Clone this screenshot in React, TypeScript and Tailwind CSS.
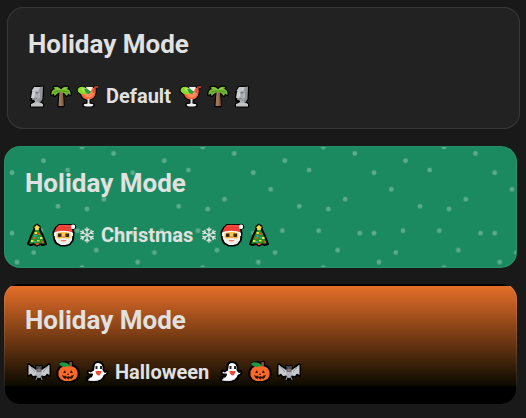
import type { ReactNode } from "react";

const iconSize = "block h-6 w-6 shrink-0 overflow-visible";

function Moai() {
  return (
    <svg viewBox="0 0 18 24" className="block h-6 w-[18px] shrink-0 overflow-visible" aria-hidden="true">
      <path d="M6 3L15 2.500L15 8L14.500 15L12.500 18L15 20V22.500H3V20L6 17.500L3 16L3.500 11L3.500 7.500Z" fill="#a9abb0" stroke="#000" strokeWidth="2.200" strokeLinejoin="round" />
      <path d="M11 3L15 2.500L14.500 15L12.500 18L9 17L11 10Z" fill="#939499" />
      <path d="M6 3H12L11 6.500L5 8L3.500 7Z" fill="#c6c7ca" />
      <path d="M4 8L7.500 7.500L7 12L5.500 14L3 14Z" fill="#cfd0d3" />
      <path d="M7.500 8H11L10 9.500H7.500Z" fill="#77787e" />
      <path d="M4 15.500L9 14.500" stroke="#75767c" strokeWidth="1" />
      <path d="M10 10L12 7V14L9.500 15Z" fill="#b3b4b9" />
      <path d="M3 20L7 18.500H12L15 20V22.500H3Z" fill="#c4c4c7" />
    </svg>
  );
}

function Palm() {
  const fronds =
    "M12 6C10.500 2.500 7 2 4.500 3.500L6 5C3.500 5.500 2 8 2.500 11L5 9.500L5.500 12L9 9L12 8L15 9L18 12L19 9.500L21.500 11C22 8 20.500 5.500 18 5L19.500 3.500C17 2 13.500 2.500 12 6Z";
  return (
    <svg viewBox="0 0 24 24" className={iconSize} aria-hidden="true">
      <path d="M10.500 8H14L14.500 22H9.500Z" fill="#a77b5b" stroke="#000" strokeWidth="2.400" strokeLinejoin="round" />
      <path d={fronds} stroke="#000" strokeWidth="2.400" strokeLinejoin="round" />
      <path d="M10.500 8H14L14.500 22H9.500Z" fill="#a47758" />
      <path d="M12.500 9H14L14.500 22H12.500Z" fill="#8a6047" />
      <path d={fronds} fill="#75b92f" />
      <path d="M5 8L12 6.500L19 8" fill="none" stroke="#4d9627" strokeWidth="1.200" />
      <path d="M7 4L12 6L17 4" fill="none" stroke="#98d347" />
    </svg>
  );
}

function Cocktail() {
  const bowl = "M4.500 4H19.500C20 8 19.500 11 18 13C16.500 15 14.500 15.500 12.500 15.500C10 15.500 8 15 6.500 13C5 11 4.300 8 4.500 4Z";
  return (
    <svg viewBox="0 0 24 24" className={iconSize} aria-hidden="true">
      <path d="M12.500 14V20M8.500 21H16.500" stroke="#000" strokeWidth="4.500" strokeLinecap="round" />
      <path d={bowl} stroke="#000" strokeWidth="2.200" strokeLinejoin="round" />
      <path d="M1.500 6C2 3 5 2 8 3L13 8L10 10C5 11 2 9 1.500 6Z" stroke="#000" strokeWidth="1.800" />
      <path d="M17 8L19 3H22" fill="none" stroke="#000" strokeWidth="3" />
      <path d={bowl} fill="#f06b3b" />
      <path d="M8 9L18 7.500C18 11 16 13.500 12.500 13.500C10 13.500 8 12 8 9Z" fill="#ff8a5c" />
      <path d="M10 3H17L15 7H12Z" fill="#f5eee9" />
      <path d="M1.500 6C2 3 5 2 8 3L13 8L10 10C5 11 2 9 1.500 6Z" fill="#8fd92d" />
      <path d="M5 5L9 3.500L13 8L10 9Z" fill="#b9ea63" />
      <path d="M8 5L11 4.500L15 8L13 10L10 9Z" fill="#249f43" />
      <path d="M17 9L19 3H22" fill="none" stroke="#dc4935" strokeWidth="1.300" />
      <path d="M12.500 15V20" stroke="#dce0e6" strokeWidth="2" />
      <ellipse cx="12.500" cy="21" rx="4.800" ry="1.500" fill="#f0f2f5" />
    </svg>
  );
}

function Tree() {
  return (
    <svg viewBox="0 0 24 24" className={iconSize} aria-hidden="true">
      <path d="M12 1.500L14.500 3.500L15 7L18 13L21 21L18 22L15 21L12 22.500L9 21L6 22L3 21L6 13L9 7L9.500 3.500Z" fill="#168820" stroke="#000" strokeWidth="2" strokeLinejoin="round" />
      <path d="M12 5L16.500 13L19 20L15 20.500L12 21.500L8 20L5 20.500L8 13Z" fill="#279422" />
      <path d="M12 1.500L13.200 3.200L15 4L13.800 5.500V7H10.200V5.500L9 4L10.800 3.200Z" fill="#ffe03a" />
      <path d="M9.500 9H12V11H9.500ZM15 14H17.500V16H15ZM6 17H8.500V19H6ZM12 17H14.500V18.500H12Z" fill="#f5dc34" />
      <path d="M13 10H15V12H13ZM8 14H10.500V16H8ZM11 20H13.500V22H11ZM17 18H19V20H17Z" fill="#ee4b31" />
      <path d="M9 12H11.500V13.500H9ZM12.500 14H14.500V15.500H12.500ZM9 18H11V19.500H9Z" fill="#20a5dc" />
    </svg>
  );
}

function Santa() {
  return (
    <svg viewBox="0 0 24 24" className={iconSize} aria-hidden="true">
      <path d="M1.500 9L4 4.500L7 2H20C23 1 24.500 4 22 5.500L20.500 6L21.500 10L21 17L18 21L14 22.500H9L4 20L2 16Z" fill="#f2f0ed" stroke="#000" strokeWidth="2" strokeLinejoin="round" />
      <path d="M2.500 9L4.500 4.500L7.500 2H19L20.500 9Z" fill="#ef4035" />
      <path d="M6 3.500C9 2 13 2 17 3" fill="none" stroke="#ff5548" />
      <path d="M2 10C5 7 17 7 21 10V13H2Z" fill="#f9f7f5" />
      <path d="M4.500 10.500C8 8.500 15 8.500 18.500 10.500V17H4.500Z" fill="#ffc34b" />
      <circle cx="21" cy="3.700" r="2.200" fill="#fff" />
      <path d="M6 10.500H9.500V14H6ZM13.500 10.500H17V14H13.500Z" fill="#332a20" />
      <path d="M3 14L7 16L11.500 14.500L16 16L20 14V17L17 21L13 22H9L5 19.500Z" fill="#f3f1ef" />
      <path d="M10 13H13V15H10Z" fill="#f09a4c" />
      <path d="M8.500 17H14.500C13.500 19 9.500 19 8.500 17Z" fill="#ef8061" />
    </svg>
  );
}

function Snowflake() {
  return (
    <svg viewBox="0 0 16 16" className="block h-4 w-4 shrink-0 overflow-visible" fill="none" stroke="#e1e1e1" strokeWidth="1.300" aria-hidden="true">
      {[0, 60, 120, 180, 240, 300].map((angle) => (
        <path key={angle} transform={`rotate(${angle} 8 8)`} d="M8 8V0.300M5.700 1.700L8 4L10.300 1.700" />
      ))}
    </svg>
  );
}

function Bat() {
  const outline =
    "M2 4L9 9L9.500 5.500L11 6.500H13L14.500 5.500L15 9L22 4L23 5V16L20 14.500L18 17L15.500 16.500L14 20L12 19L10 20L8.500 16.500L6 17L4 14.500L1 16V5Z";
  return (
    <svg viewBox="0 0 24 24" className={iconSize} aria-hidden="true">
      <path d={outline} fill="#8d9196" stroke="#000" strokeWidth="2" strokeLinejoin="round" />
      <path d="M1.500 5L9 10L10 15L6 16L4 13.500L1.500 15ZM22.500 5L15 10L14 15L18 16L20 13.500L22.500 15Z" fill="#c8cace" />
      <path d="M9.500 5.500L11 6.500H13L14.500 5.500V10L13.500 12H10.500L9.500 10Z" fill="#686c71" />
      <path d="M10 8H11.500M12.500 8H14" stroke="#17181a" />
      <path d="M11 10H13" stroke="#e07a69" />
      <path d="M9.500 12H14.500L14 16L12 18L10 16Z" fill="#b0b3b7" />
      <path d="M2 5L8 12M22 5L16 12M10 17L9 20M14 17L15 20" fill="none" stroke="#8e949b" />
    </svg>
  );
}

function Pumpkin() {
  return (
    <svg viewBox="0 0 24 24" className={iconSize} aria-hidden="true">
      <path d="M4 3L10 2L13 4L13.500 2H16V5L20 7L22.500 11V16L20 20L15 22H8L4 20L1.500 16V11L4 7L6 6Z" fill="#fb6a2a" stroke="#000" strokeWidth="2" strokeLinejoin="round" />
      <path d="M3 3.500C6 1 12 2 14 6L8 7L5 6Z" fill="#21973d" />
      <path d="M13.500 2H16V6.500H13Z" fill="#874a49" />
      <path d="M7 13L9 10L10 13ZM14 13L15 10L17 13ZM12 13L13 15H11Z" fill="#321708" />
      <path d="M6 15L8.500 16L9.500 15.500L11 17L12.500 16L14 17L15.500 15.500L18 15L16.500 18L15 19L14 18L12.500 19.500L10.500 18L9 19L7 17.500Z" fill="#2e170a" />
    </svg>
  );
}

function Ghost() {
  const body =
    "M8.500 7C8.500 3.500 10.500 2 13 2C17 2 19 4.500 18.500 10L20 12L21.500 11C23.500 12 22.500 15 19.500 15.500C19 19 15 22 9 22C6 22 3 21 1.500 20L3.500 18.500L1.500 17.500L6 16.500L7 14.500H4.500C2 14 2 11 4 10.500L5.500 11.500L8 10Z";
  return (
    <svg viewBox="0 0 24 24" className={iconSize} aria-hidden="true">
      <path d={body} fill="#fff" stroke="#000" strokeWidth="2" strokeLinejoin="round" />
      <path d="M10.500 6H12.500V9H10.500ZM15 6H17V9H15Z" fill="#29252c" />
      <path d="M10.500 11H16.500C16 14 14.500 16 13 15.500C11.500 15 10.500 13 10.500 11Z" fill="#f04b36" />
      <path d="M3 20C7 21 12 21 16 18.500" fill="none" stroke="#dcd9e3" />
    </svg>
  );
}

const flakes = [
  [77, 0], [108.5, 6.5], [38.5, 13.7], [62.7, 23], [7, 25.7], [24.3, 42.3],
  [98.8, 52.3], [53, 59.3], [82, 62], [36, 83.7], [72.3, 83.7], [7, 86.2],
  [113.5, 86.2], [91.3, 103.2], [28.7, 105.5], [12, 115.2], [77, 120.67],
];

function Snow() {
  return (
    <svg className="pointer-events-none absolute inset-0 h-full w-full" aria-hidden="true">
      <defs>
        <pattern id="snow" width="120.670" height="120.670" patternUnits="userSpaceOnUse">
          {flakes.map(([x, y]) => (
            <circle key={`${x}-${y}`} cx={x} cy={y} r="2.400" fill="#fff" fillOpacity="0.28" />
          ))}
        </pattern>
      </defs>
      <rect width="100%" height="100%" fill="url(#snow)" />
    </svg>
  );
}

type CardProps = {
  className: string;
  gap: string;
  before: ReactNode;
  label: string;
  after: ReactNode;
  backdrop?: ReactNode;
};

function Card({ className, gap, before, label, after, backdrop }: CardProps) {
  return (
    <section className={`relative overflow-hidden rounded-2xl border px-5 pt-5 pb-4 ${className}`}>
      {backdrop}
      <div className="relative">
        <h2 className="text-[26px] leading-8 font-bold">Holiday Mode</h2>
        <p className="mt-5 flex h-8 items-center text-xl leading-8 font-bold">
          <span className={`flex ${gap}`}>{before}</span>
          <span className="mr-2 ml-[6px]">{label}</span>
          <span className={`flex ${gap}`}>{after}</span>
        </p>
      </div>
    </section>
  );
}

export default function App() {
  return (
    <main className="min-h-screen bg-[#191919] pt-[7px] pr-[9px] pb-[14px] pl-1 font-[Roboto,'Liberation_Sans',sans-serif] text-[#e1e1e1]">
      <Card
        className="-mr-[3px] ml-[3px] border-white/10 bg-[#222222]"
        gap="gap-[3px]"
        before={<><Moai /><Palm /><Cocktail /></>}
        label="Default"
        after={<><Cocktail /><Palm /><Moai /></>}
      />
      <Card
        className="mt-[17px] border-white/5 bg-[#1c8a60]"
        gap="items-center gap-[3px]"
        backdrop={<Snow />}
        before={<><Tree /><Santa /><Snowflake /></>}
        label="Christmas"
        after={<><Snowflake /><Santa /><Tree /></>}
      />
      <Card
        className="mt-[15px] border-white/10 bg-[linear-gradient(#000_2px,#e56e28_2px,#0a0a00_102px,#000_102px)]"
        gap="gap-[5px] pl-[2px]"
        before={<><Bat /><Pumpkin /><Ghost /></>}
        label="Halloween"
        after={<><Ghost /><Pumpkin /><Bat /></>}
      />
    </main>
  );
}
